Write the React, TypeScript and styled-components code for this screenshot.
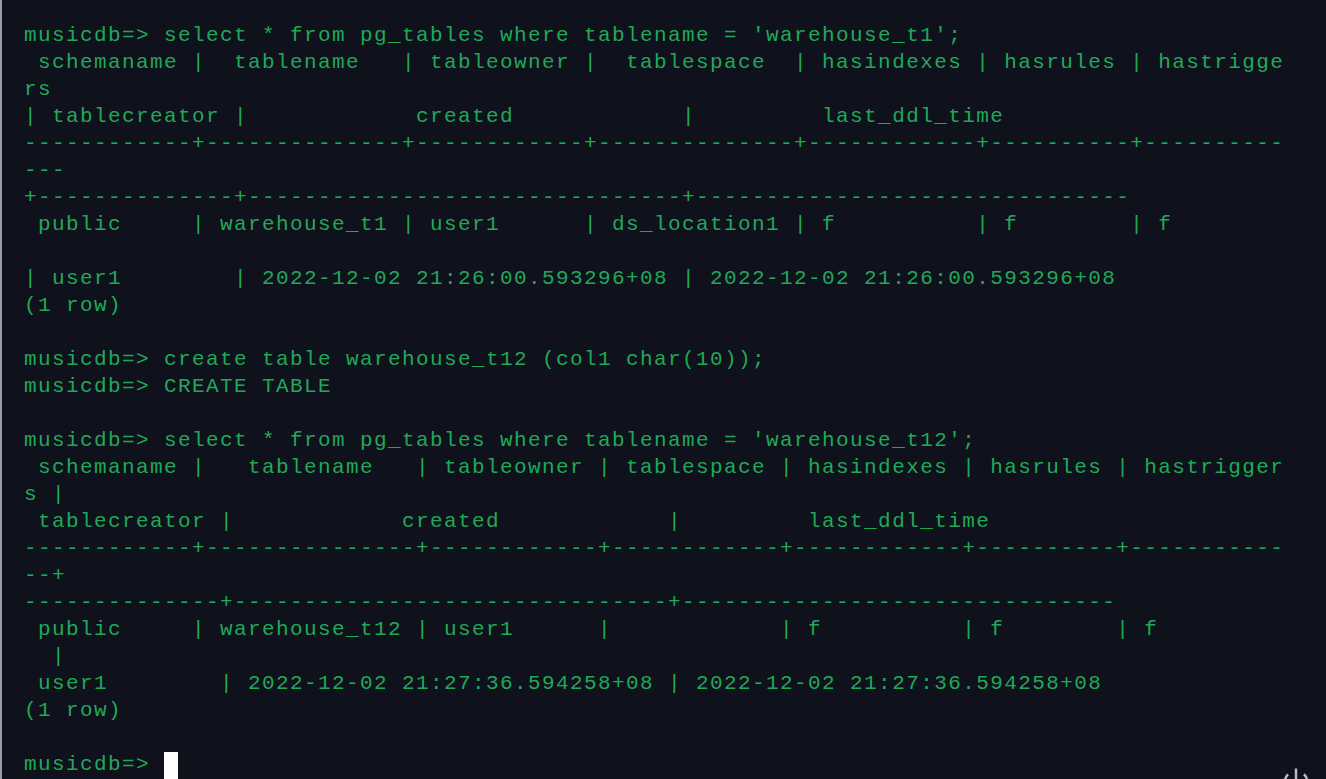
import React from "react";
import styled, { createGlobalStyle } from "styled-components";

const GlobalStyle = createGlobalStyle`
  html, body {
    margin: 0;
    padding: 0;
    background: #0f111c;
    overflow: hidden;
  }
  #root {
    height: 100vh;
  }
`;

const Screen = styled.div`
  position: relative;
  height: 100vh;
  box-sizing: border-box;
  background: #0f111c;
  border-left: 2px solid #9c9ca2;
  overflow: hidden;
`;

const Terminal = styled.div`
  display: flex;
  flex-direction: column;
  padding: 22px 0 0 22px;
  font-family: "Liberation Mono", "Courier New", monospace;
  font-size: 21px;
  letter-spacing: 1.4px;
  color: #1fa957;
`;

const Line = styled.div`
  height: 27px;
  line-height: 27px;
  white-space: pre;
`;

const Cursor = styled.span`
  display: inline-block;
  width: 14px;
  height: 27px;
  vertical-align: top;
  margin-top: 1px;
  background: #ffffff;
`;

const PowerButton = styled.div`
  position: absolute;
  right: 15px;
  bottom: -17px;
  width: 30px;
  height: 30px;
  color: #b6bac6;
`;

const sp = (n: number) => " ".repeat(n);

const lines: string[] = [
  "musicdb=> select * from pg_tables where tablename = 'warehouse_t1';",
  " schemaname |  tablename   | tableowner |  tablespace  | hasindexes | hasrules | hastrigge",
  "rs",
  "| tablecreator |" + sp(12) + "created" + sp(12) + "|" + sp(9) + "last_ddl_time",
  "------------+--------------+------------+--------------+------------+----------+----------",
  "---",
  "+--------------+-------------------------------+-------------------------------",
  " public     | warehouse_t1 | user1      | ds_location1 | f          | f        | f",
  "",
  "| user1        | 2022-12-02 21:26:00.593296+08 | 2022-12-02 21:26:00.593296+08",
  "(1 row)",
  "",
  "musicdb=> create table warehouse_t12 (col1 char(10));",
  "musicdb=> CREATE TABLE",
  "",
  "musicdb=> select * from pg_tables where tablename = 'warehouse_t12';",
  " schemaname |   tablename   | tableowner | tablespace | hasindexes | hasrules | hastrigger",
  "s |",
  " tablecreator |" + sp(12) + "created" + sp(12) + "|" + sp(9) + "last_ddl_time",
  "------------+---------------+------------+------------+------------+----------+-----------",
  "--+",
  "--------------+-------------------------------+-------------------------------",
  " public     | warehouse_t12 | user1      |            | f          | f        | f",
  "  |",
  " user1        | 2022-12-02 21:27:36.594258+08 | 2022-12-02 21:27:36.594258+08",
  "(1 row)",
  "",
];

export default function App() {
  return (
    <>
      <GlobalStyle />
      <Screen>
        <Terminal>
          {lines.map((l, i) => (
            <Line key={i}>{l}</Line>
          ))}
          <Line>
            {"musicdb=> "}
            <Cursor />
          </Line>
        </Terminal>
        <PowerButton>
          <svg
            width="30"
            height="30"
            viewBox="0 0 24 24"
            fill="none"
            stroke="currentColor"
            strokeWidth="2"
            strokeLinecap="butt"
          >
            <path d="M12 2v10" />
            <path d="M18.4 6.6a9 9 0 1 1-12.79.04" />
          </svg>
        </PowerButton>
      </Screen>
    </>
  );
}
